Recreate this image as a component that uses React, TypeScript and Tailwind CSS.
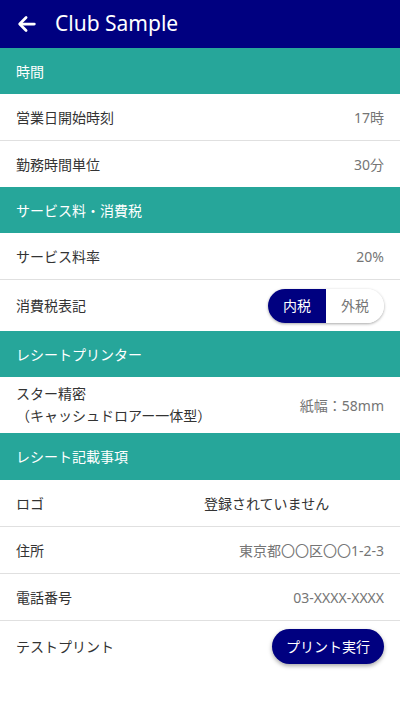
import React from "react";

const font = { fontFamily: '"Noto Sans", "Noto Sans CJK JP", sans-serif' };

function Section({ title, tall }: { title: string; tall?: boolean }) {
  return (
    <div
      className={`${tall ? "h-[47px]" : "h-[46px]"} bg-[#26a69a] text-white text-[14px] flex items-center px-4`}
    >
      {title}
    </div>
  );
}

function Row({
  label,
  value,
  last,
}: {
  label: React.ReactNode;
  value?: React.ReactNode;
  last?: boolean;
}) {
  return (
    <div
      className={`flex items-center justify-between px-4 text-[14px] text-[#333] ${
        last ? "h-[46px]" : "h-[47px] border-b border-[#e0e0e0]"
      }`}
    >
      <div>{label}</div>
      {value && <div className="text-[#757575]">{value}</div>}
    </div>
  );
}

export default function App() {
  return (
    <div className="w-[400px] h-[711px] bg-white" style={font}>
      {/* header */}
      <div className="h-12 bg-[#000080] flex items-center px-4 gap-[17px] text-white">
        <svg width="22" height="22" viewBox="0 0 24 24" fill="none" stroke="white" strokeWidth="3" strokeLinecap="round" strokeLinejoin="round">
          <path d="M20 12H5" />
          <path d="M11 5l-7 7 7 7" />
        </svg>
        <div className="text-[21px]">Club Sample</div>
      </div>

      <Section title="時間" />
      <Row label="営業日開始時刻" value="17時" />
      <Row label="勤務時間単位" value="30分" last />

      <Section title="サービス料・消費税" />
      <Row label="サービス料率" value="20%" />
      <div className="h-[51px] flex items-center justify-between px-4 text-[14px] text-[#333]">
        <div>消費税表記</div>
        <div className="flex h-[34px] rounded-full overflow-hidden shadow-[0_1px_3px_rgba(0,0,0,0.35)]">
          <div className="w-[58px] bg-[#000080] text-white flex items-center justify-center">内税</div>
          <div className="w-[58px] bg-white text-[#757575] flex items-center justify-center">外税</div>
        </div>
      </div>

      <Section title="レシートプリンター" />
      <div className="h-[56px] flex items-center justify-between px-4 text-[14px] text-[#333]">
        <div className="leading-[22px]">
          スター精密
          <br />
          （キャッシュドロアー一体型）
        </div>
        <div className="text-[#757575]">紙幅：58mm</div>
      </div>

      <Section title="レシート記載事項" tall />
      <div className="h-[47px] flex items-center px-4 text-[14px] text-[#333] border-b border-[#e0e0e0]">
        <div className="w-[188px]">ロゴ</div>
        <div>登録されていません</div>
      </div>
      <Row label="住所" value="東京都〇〇区〇〇1-2-3" />
      <Row label="電話番号" value="03-XXXX-XXXX" />
      <div className="h-[50px] flex items-center justify-between px-4 text-[14px] text-[#333]">
        <div>テストプリント</div>
        <button className="h-[35px] w-[112px] rounded-full bg-[#000080] text-white text-[14px] shadow-[0_2px_4px_rgba(0,0,0,0.35)]">
          プリント実行
        </button>
      </div>
    </div>
  );
}
